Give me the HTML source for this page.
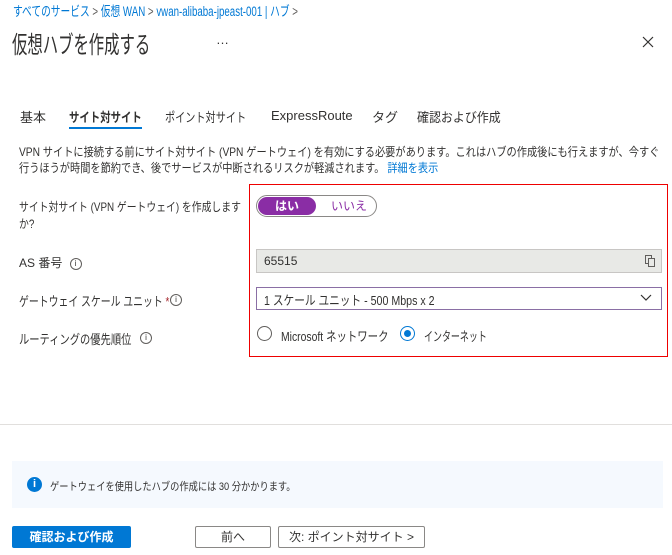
<!DOCTYPE html><html><head><meta charset="utf-8"><style>
body{margin:0;width:672px;height:555px;background:#fff;font-family:"Liberation Sans","Noto Sans CJK JP",sans-serif;color:#323130;position:relative;overflow:hidden}
.a{position:absolute;white-space:nowrap;transform-origin:0 0}
.s{font-size:12px}
.i{display:inline-block;width:10px;height:10px;border:1px solid #605e5c;border-radius:50%;font-size:8px;text-align:center;line-height:10px;margin-left:4px;vertical-align:middle}
</style></head><body>
<div class="a" style="left:13px;top:0;font-size:13.5px;color:#0078d4;transform:scaleX(0.72)">すべてのサービス <span style="color:#605e5c">&gt;</span> 仮想 WAN <span style="color:#605e5c">&gt;</span> vwan-alibaba-jpeast-001 | ハブ <span style="color:#605e5c">&gt;</span></div>
<div class="a" style="left:12px;top:25px;font-size:24px;color:#323130;transform:scaleX(0.64)">仮想ハブを作成する</div>
<div class="a" style="left:216px;top:32px;font-size:13px">…</div>
<svg class="a" style="left:642px;top:36px" width="12" height="12"><path d="M1 1L11 11M11 1L1 11" stroke="#323130" stroke-width="1.2"/></svg>
<div class="a" style="top:107px;left:20px;font-size:13px">基本</div>
<div class="a" style="top:107px;left:69px;font-size:13px;font-weight:bold;transform:scaleX(0.8)">サイト対サイト</div>
<div class="a" style="top:127px;left:69px;width:73px;height:2px;background:#0078d4"></div>
<div class="a" style="top:107px;left:165px;font-size:13px;transform:scaleX(0.78)">ポイント対サイト</div>
<div class="a" style="top:108px;left:271px;font-size:13px">ExpressRoute</div>
<div class="a" style="top:107px;left:372px;font-size:13px">タグ</div>
<div class="a" style="top:107px;left:417px;font-size:13px;transform:scaleX(0.92)">確認および作成</div>
<div class="a s" style="left:19px;top:144px;line-height:16px;transform:scaleX(0.85)">VPN サイトに接続する前にサイト対サイト (VPN ゲートウェイ) を有効にする必要があります。これはハブの作成後にも行えますが、今すぐ<br>行うほうが時間を節約でき、後でサービスが中断されるリスクが軽減されます。 <span style="color:#0078d4">詳細を表示</span></div>
<div class="a" style="left:249px;top:184px;width:417px;height:171px;border:1px solid #e00"></div>
<div class="a s" style="left:19px;top:199px;line-height:17px;transform:scaleX(0.82)">サイト対サイト (VPN ゲートウェイ) を作成します<br>か?</div>
<div class="a" style="left:256px;top:195px;width:119px;height:20px;border:1px solid #8a8886;border-radius:11px"></div>
<div class="a s" style="left:258px;top:197px;width:58px;height:18px;background:#8a2da5;border-radius:9px;color:#fff;text-align:center;line-height:18px;font-weight:bold">はい</div>
<div class="a s" style="left:331px;top:197px;line-height:18px;color:#8a2da5">いいえ</div>
<div class="a s" style="left:19px;top:254px">AS 番号 <span class="i">i</span></div>
<div class="a" style="left:256px;top:249px;width:404px;height:22px;background:#e8e9e6;border:1px solid #c8c6c4"></div>
<div class="a s" style="left:264px;top:254px">65515</div>
<svg class="a" style="left:645px;top:255px" width="10" height="12"><rect x="0.5" y="0.5" width="6" height="8" fill="none" stroke="#605e5c"/><rect x="3.5" y="3.5" width="6" height="8" fill="#e8e9e6" stroke="#605e5c"/></svg>
<div class="a" style="left:19px;top:291px;font-size:13px;transform:scaleX(0.76)">ゲートウェイ スケール ユニット <span style="color:#a4262c">*</span></div>
<div class="a s" style="left:166px;top:292px"><span class="i">i</span></div>
<div class="a" style="left:256px;top:287px;width:404px;height:21px;border:1px solid #8a6fa5"></div>
<div class="a" style="left:264px;top:290px;font-size:13px;transform:scaleX(0.82)">1 スケール ユニット - 500 Mbps x 2</div>
<svg class="a" style="left:640px;top:294px" width="12" height="8"><path d="M1 1L6 6L11 1" fill="none" stroke="#323130" stroke-width="1.2"/></svg>
<div class="a" style="left:19px;top:329px;font-size:13px;transform:scaleX(0.79)">ルーティングの優先順位</div>
<div class="a s" style="left:136px;top:330px"><span class="i">i</span></div>
<div class="a" style="left:257px;top:326px;width:13px;height:13px;border:1px solid #605e5c;border-radius:50%"></div>
<div class="a" style="left:281px;top:326px;font-size:13px;transform:scaleX(0.8)">Microsoft ネットワーク</div>
<div class="a" style="left:400px;top:326px;width:13px;height:13px;border:1px solid #0078d4;border-radius:50%"></div>
<div class="a" style="left:404px;top:330px;width:7px;height:7px;background:#0078d4;border-radius:50%"></div>
<div class="a" style="left:424px;top:326px;font-size:13px;transform:scaleX(0.69)">インターネット</div>
<div class="a" style="left:0;top:424px;width:672px;height:1px;background:#e1dfdd"></div>
<div class="a" style="left:12px;top:461px;width:651px;height:47px;background:#f5f9fe"></div>
<div class="a" style="left:27px;top:477px;width:15px;height:15px;border-radius:50%;background:#0078d4;color:#fff;font-size:11px;font-weight:bold;text-align:center;line-height:15px">i</div>
<div class="a" style="left:50px;top:478px;font-size:11px;transform:scaleX(0.84)">ゲートウェイを使用したハブの作成には 30 分かかります。</div>
<div class="a s" style="left:12px;top:526px;width:119px;height:22px;background:#0078d4;color:#fff;text-align:center;line-height:22px;border-radius:2px;font-weight:bold">確認および作成</div>
<div class="a s" style="left:195px;top:526px;width:74px;height:20px;border:1px solid #8a8886;text-align:center;line-height:20px;border-radius:2px">前へ</div>
<div class="a s" style="left:278px;top:526px;width:145px;height:20px;border:1px solid #8a8886;text-align:center;line-height:20px;border-radius:2px">次: ポイント対サイト &gt;</div>
</body></html>
